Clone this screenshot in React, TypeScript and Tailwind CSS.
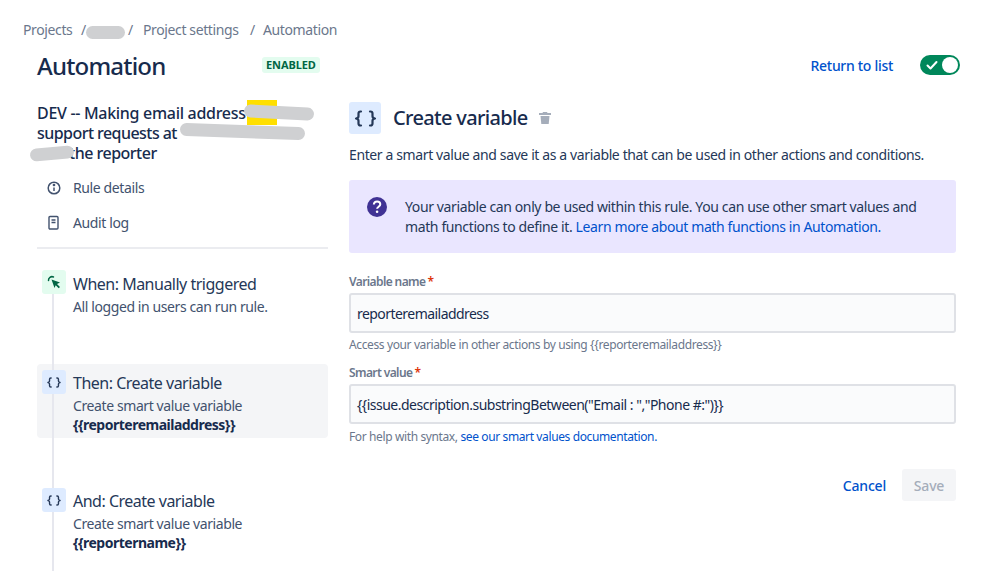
import React from "react";

const Braces = ({ w = 14, h = 11 }: { w?: number; h?: number }) => (
  <svg width={w} height={h} viewBox="0 0 22 17" fill="none" stroke="#253858" strokeWidth="2.200" strokeLinecap="round" strokeLinejoin="round">
    <path d="M6.500 1.500H6C4.600 1.500 4 2.200 4 3.500v2.700c0 1.200-.7 2-2.500 2.300C3.300 8.800 4 9.600 4 10.800v2.700c0 1.300.6 2 2 2h.5" />
    <path d="M15.500 1.500h.5c1.400 0 2 .7 2 2v2.700c0 1.200.7 2 2.500 2.300-1.800.3-2.500 1.100-2.500 2.300v2.700c0 1.300-.6 2-2 2h-.5" />
  </svg>
);

const Blob = ({ className }: { className: string }) => (
  <span className={`absolute bg-[#cfd0d2] rounded-full ${className}`} />
);

const Step = ({
  icon, iconBg, title, sub, bold, className, textClass,
}: { icon: React.ReactNode; iconBg: string; title: string; sub: string; bold?: string; className: string; textClass: string }) => (
  <div className={`flex rounded-[4px] pl-[5px] ${className}`}>
    <div className={`relative w-6 h-6 rounded-[3px] flex items-center justify-center shrink-0 ${iconBg}`}>{icon}</div>
    <div className={`ml-[7px] ${textClass}`}>
      <div className="text-[16px] leading-[20px] text-[#253858] tracking-[-0.5px]">{title}</div>
      <div className="text-[14px] leading-[19px] text-[#42526e] mt-[3px] tracking-[-0.4px]">{sub}</div>
      {bold && <div className="text-[14px] leading-[19px] font-bold text-[#172b4d] tracking-[-0.5px]">{bold}</div>}
    </div>
  </div>
);

export default function App() {
  return (
    <div className="w-[998px] h-[571px] overflow-hidden bg-white relative font-['Noto_Sans','Open_Sans',sans-serif] tracking-[-0.38px]">
      <div className="pl-[23px] pt-[20px] h-[45px] flex items-start text-[14px] leading-[19px] text-[#6b778c]">
        <span className="w-[58px]">Projects</span>
        <span className="relative w-[62px]">/<Blob className="left-[5px] top-[6px] w-[39px] h-[13px]" /><span className="absolute left-[47px] top-0">/</span></span>
        <span className="w-[107px]">Project settings</span>
        <span className="w-[13px]">/</span>
        <span>Automation</span>
      </div>

      <div className="pl-[37px] pr-[38px] h-[42px] flex items-center">
        <h1 className="text-[24px] leading-[32px] font-medium text-[#172b4d] w-[225px] tracking-[-0.8px]">Automation</h1>
        <span className="bg-[#e3fcef] text-[#006644] text-[11px] leading-[16px] font-bold rounded-[3px] px-[4px] -mt-[2px] tracking-[-0.1px]">ENABLED</span>
        <a className="ml-auto text-[14px] text-[#0052cc] font-medium -mt-[1px] tracking-[-0.3px]">Return to list</a>
        <div className="ml-[27px] w-[40px] h-[20px] rounded-full bg-[#00875a] relative flex items-center -mt-[2px]">
          <svg width="14" height="14" viewBox="0 0 14 14" className="ml-[5px]" fill="none" stroke="#fff" strokeWidth="2" strokeLinecap="round" strokeLinejoin="round"><path d="M2.500 7.500 5.500 10.500 11.500 4" /></svg>
          <span className="absolute right-[2px] top-[2px] w-4 h-4 rounded-full bg-white" />
        </div>
      </div>

      <div className="flex pl-[37px] pr-[42px] mt-[7px]">
        <div className="w-[291px] shrink-0 relative">
          <div className="relative text-[16px] leading-[20px] font-medium text-[#172b4d] h-[60px] mt-[9px]">
            <span className="absolute left-[210px] top-[-3px] w-[30px] h-[25px] bg-[#ffdf00]" />
            <div className="relative tracking-[-0.3px]">DEV -- Making email address</div>
            <div className="relative tracking-[-0.55px]">support requests at</div>
            <div className="relative pl-[32px] tracking-[-0.5px]">the reporter</div>
            <Blob className="left-[207px] top-[3px] w-[70px] h-[13px] rotate-[3deg]" />
            <Blob className="left-[143px] top-[22px] w-[125px] h-[13px] rotate-[2deg]" />
            <Blob className="left-[-7px] top-[44px] w-[44px] h-[13px] -rotate-[5deg]" />
          </div>
          <div className="mt-[7px] flex items-center h-[35px] text-[14px] text-[#42526e]">
            <svg width="16" height="16" viewBox="0 0 16 16" className="ml-[9px]" fill="none" stroke="#42526e" strokeWidth="1.500"><circle cx="8" cy="8" r="5.800" /><path d="M8 7.500v3.500" /><circle cx="8" cy="5" r=".6" fill="#42526e" /></svg>
            <span className="ml-[11px]">Rule details</span>
          </div>
          <div className="flex items-center h-[35px] text-[14px] text-[#42526e]">
            <svg width="16" height="16" viewBox="0 0 16 16" className="ml-[9px]" fill="none" stroke="#42526e" strokeWidth="1.400"><rect x="3" y="1.500" width="9" height="12.500" rx="1" /><path d="M5.500 5h4M5.500 7.500h4" /></svg>
            <span className="ml-[11px]">Audit log</span>
          </div>
          <div className="h-[2px] bg-[#ebecf0] mt-[7px]" />

          <div className="relative mt-[21px]">
            <div className="absolute left-[15px] top-0 bottom-[-60px] w-[2px] bg-[#e6e7ee]" />
            <Step
              className="h-[74px] pt-0 mb-[20px]"
              textClass="pt-[4px]"
              iconBg="bg-[#e3fcef]"
              icon={<svg width="14" height="14" viewBox="0 0 14 14"><path d="M1.500 5.500A3.500 3.500 0 0 1 6.500 2" fill="none" stroke="#006644" strokeWidth="1.500" strokeLinecap="round" /><path d="M4.500 4.500 13 7.500 10 9l3 3-1.300 1.300-3-3L7.500 13z" fill="#006644" /></svg>}
              title="When: Manually triggered"
              sub="All logged in users can run rule."
            />
            <Step
              className="h-[74px] bg-[#f4f5f7] pt-[6px] mb-[44px]"
              textClass="pt-[3px]"
              iconBg="bg-[#deebff]"
              icon={<Braces />}
              title="Then: Create variable"
              sub="Create smart value variable"
              bold="{{reporteremailaddress}}"
            />
            <Step
              className="h-[74px] pt-[6px]"
              textClass="pt-[3px]"
              iconBg="bg-[#deebff]"
              icon={<Braces />}
              title="And: Create variable"
              sub="Create smart value variable"
              bold="{{reportername}}"
            />
          </div>
        </div>

        <div className="ml-[21px] flex-1 min-w-0">
          <div className="flex items-center h-[32px] mt-[8px]">
            <div className="w-8 h-8 rounded-[3px] bg-[#deebff] flex items-center justify-center"><Braces w={23} h={17} /></div>
            <h2 className="ml-[12px] text-[20px] leading-[28px] font-medium text-[#172b4d] tracking-[-0.67px]">Create variable</h2>
            <svg width="14" height="14" viewBox="0 0 14 14" className="ml-[10px]" fill="#a5adba"><path d="M5 1h4l.5 1H13v2H1V2h3.500z" /><path d="M2.500 5h9l-.8 8H3.300z" /></svg>
          </div>
          <p className="mt-[11px] text-[14px] leading-[20px] text-[#253858]">Enter a smart value and save it as a variable that can be used in other actions and conditions.</p>
          <div className="mt-[15px] h-[73px] rounded-[3px] bg-[#eae6ff] flex pl-[16px] pt-[17px]">
            <svg width="24" height="24" viewBox="0 0 24 24" className="shrink-0 -mt-[2px]"><circle cx="12" cy="12" r="10" fill="#403294" /><path d="M8.800 9.500c.2-2 1.600-3 3.300-3 1.800 0 3.200 1.100 3.200 2.800 0 2.400-3.200 2.500-3.200 4.500" fill="none" stroke="#fff" strokeWidth="2" /><circle cx="12.100" cy="16.800" r="1.300" fill="#fff" /></svg>
            <div className="ml-[16px] text-[14px] leading-[20px] text-[#253858]">
              Your variable can only be used within this rule. You can use other smart values and<br />
              math functions to define it. <a className="text-[#0052cc]">Learn more about math functions in Automation.</a>
            </div>
          </div>

          <label className="block mt-[21px] text-[12px] leading-[16px] font-semibold text-[#6b778c] tracking-[-0.6px]">Variable name<span className="text-[#de350b] ml-[2px]">*</span></label>
          <div className="mt-[3px] h-[40px] rounded-[3px] border-2 border-[#dfe1e6] bg-[#fafbfc] flex items-center px-[6px] text-[14px] text-[#172b4d] tracking-[-0.55px]">reporteremailaddress</div>
          <p className="mt-[4px] text-[12px] leading-[16px] text-[#6b778c]">Access your variable in other actions by using {"{{reporteremailaddress}}"}</p>
          <label className="block mt-[12px] text-[12px] leading-[16px] font-semibold text-[#6b778c] tracking-[-0.6px]">Smart value<span className="text-[#de350b] ml-[2px]">*</span></label>
          <div className="mt-[3px] h-[40px] rounded-[3px] border-2 border-[#dfe1e6] bg-[#fafbfc] flex items-center px-[6px] text-[14px] text-[#172b4d] tracking-[-0.5px]">{'{{issue.description.substringBetween("Email : ","Phone #:")}}'}</div>
          <p className="mt-[5px] text-[12px] leading-[16px] text-[#6b778c]">For help with syntax, <a className="text-[#0052cc]">see our smart values documentation.</a></p>

          <div className="mt-[24px] flex items-center justify-end">
            <a className="text-[14px] font-medium text-[#0052cc] tracking-[-0.2px]">Cancel</a>
            <div className="ml-[16px] w-[54px] h-[32px] rounded-[3px] bg-[#f4f5f7] flex items-center justify-center text-[14px] font-medium text-[#a5adba] tracking-[-0.2px]">Save</div>
          </div>
        </div>
      </div>
    </div>
  );
}
